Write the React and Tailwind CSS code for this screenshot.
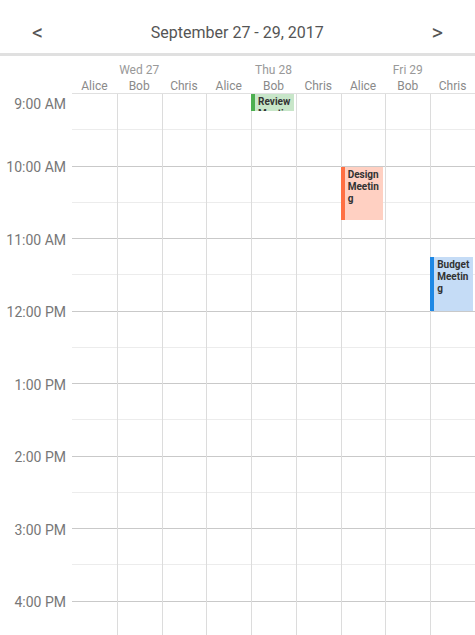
import React from 'react';

const days = ['Wed 27', 'Thu 28', 'Fri 29'];
const people = ['Alice', 'Bob', 'Chris'];
const columns = days.flatMap((day) => people.map((person) => ({ day, person })));
const hours = ['9:00 AM', '10:00 AM', '11:00 AM', '12:00 PM', '1:00 PM', '2:00 PM', '3:00 PM', '4:00 PM'];

const HOUR = 72.5;

const events = [
  { col: 4, start: 0, end: 0.25, title: 'Review Meeting', bar: 'bg-[#4caf50]', bg: 'bg-[#c8e6c9]' },
  { col: 6, start: 1, end: 1.75, title: 'Design Meeting', bar: 'bg-[#ff7043]', bg: 'bg-[#ffd0c2]' },
  { col: 8, start: 2.25, end: 3, title: 'Budget Meeting', bar: 'bg-[#1e88e5]', bg: 'bg-[#c5dcf6]' },
];

const slots = Array.from({ length: 16 }, (_, i) => i);

const App = () => {
  return (
    <div className="h-screen w-full overflow-hidden bg-white font-['Roboto',sans-serif]">
      {/* Toolbar */}
      <div className="flex h-[56px] items-center justify-between border-b-[3px] border-[#e0e0e0] px-[32px] pt-[12px] text-[#555]">
        <button className="text-[22px] leading-none">&lt;</button>
        <div className="text-[16px]">September 27 - 29, 2017</div>
        <button className="text-[22px] leading-none">&gt;</button>
      </div>

      {/* Column headers */}
      <div className="ml-[72px] text-[12px] text-[#999]">
        <div className="grid grid-cols-3 pt-[6px] leading-[16px]">
          {days.map((d) => (
            <div key={d} className="text-center">{d}</div>
          ))}
        </div>
        <div className="grid grid-cols-9 pt-px leading-[14px] text-[#8a8a8a]">
          {columns.map((c, i) => (
            <div key={i} className="text-center">{c.person}</div>
          ))}
        </div>
      </div>

      {/* Body */}
      <div className="flex">
        <div className="w-[72px] shrink-0 pr-[6px] text-right text-[14px] text-[#777]">
          <div className="mt-px h-[20px] leading-[20px]">{hours[0]}</div>
          <div className="h-[17.5px]" />
          {hours.slice(1).map((h) => (
            <div key={h} className="flex h-[72.5px] items-center justify-end">{h}</div>
          ))}
        </div>

        <div className="grid flex-1 grid-cols-9 border-t border-[#e0e0e0]">
          {columns.map((c, ci) => (
            <div key={ci} className={ci === 0 ? 'relative' : 'relative border-l border-[#dcdcdc]'}>
              {slots.map((s) => (
                <div
                  key={s}
                  className={
                    s % 2 === 0
                      ? 'h-[36.25px] border-b border-[#ececec]'
                      : 'h-[36.25px] border-b border-[#c9c9c9]'
                  }
                />
              ))}
              {events
                .filter((e) => e.col === ci)
                .map((e) => (
                  <div
                    key={e.title}
                    className={`absolute -left-px right-[2px] flex overflow-hidden ${e.bg}`}
                    style={{ top: e.start * HOUR, height: (e.end - e.start) * HOUR - 1 }}
                  >
                    <div className={`w-[4px] shrink-0 ${e.bar}`} />
                    <div className="min-w-0 flex-1 break-words px-[3px] pt-[2px] text-[10px] font-bold leading-[12px] text-[#333]">
                      {e.title}
                    </div>
                  </div>
                ))}
            </div>
          ))}
        </div>
      </div>
    </div>
  );
};

export default App;
